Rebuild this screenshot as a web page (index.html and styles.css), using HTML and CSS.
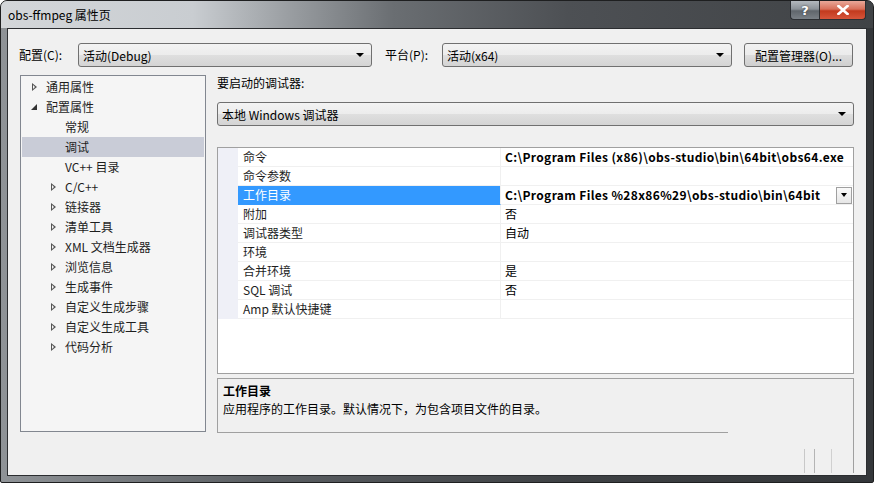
FILE: index.html
```html
<!DOCTYPE html>
<html>
<head>
<meta charset="utf-8">
<link rel="stylesheet" href="styles.css">
</head>
<body>
<div class="window">
  <div class="titlebar">
    <span class="title">obs-ffmpeg 属性页</span>
    <div class="caption">
      <div class="cbtn help">?</div>
      <div class="cbtn close">
        <svg width="12" height="10" viewBox="0 0 12 10"><path d="M1.5 1 L10.5 9 M10.5 1 L1.5 9" stroke="#fff" stroke-width="2.6" stroke-linecap="square"/></svg>
      </div>
    </div>
  </div>
  <div class="client">
    <div class="toprow">
      <span class="lbl lab1">配置(C):</span>
      <div class="combo c1"><span>活动(Debug)</span><i class="arr"></i></div>
      <span class="lbl lab2">平台(P):</span>
      <div class="combo c2"><span>活动(x64)</span><i class="arr"></i></div>
      <div class="btn">配置管理器(O)...</div>
    </div>
    <div class="main">
      <div class="tree">
        <div class="ti lv0"><i class="tri-o"></i><span>通用属性</span></div>
        <div class="ti lv0"><i class="tri-f"></i><span>配置属性</span></div>
        <div class="ti lv1n"><span>常规</span></div>
        <div class="ti lv1n sel"><span>调试</span></div>
        <div class="ti lv1n"><span>VC++ 目录</span></div>
        <div class="ti lv1"><i class="tri-o"></i><span>C/C++</span></div>
        <div class="ti lv1"><i class="tri-o"></i><span>链接器</span></div>
        <div class="ti lv1"><i class="tri-o"></i><span>清单工具</span></div>
        <div class="ti lv1"><i class="tri-o"></i><span>XML 文档生成器</span></div>
        <div class="ti lv1"><i class="tri-o"></i><span>浏览信息</span></div>
        <div class="ti lv1"><i class="tri-o"></i><span>生成事件</span></div>
        <div class="ti lv1"><i class="tri-o"></i><span>自定义生成步骤</span></div>
        <div class="ti lv1"><i class="tri-o"></i><span>自定义生成工具</span></div>
        <div class="ti lv1"><i class="tri-o"></i><span>代码分析</span></div>
      </div>
      <div class="right">
        <div class="rlabel">要启动的调试器:</div>
        <div class="combo c3"><span>本地 Windows 调试器</span><i class="arr"></i></div>
        <div class="grid">
          <div class="row"><div class="gut"></div><div class="name">命令</div><div class="val b">C:\Program Files (x86)\obs-studio\bin\64bit\obs64.exe</div></div>
          <div class="row"><div class="gut"></div><div class="name">命令参数</div><div class="val"></div></div>
          <div class="row selrow"><div class="gut"></div><div class="name">工作目录</div><div class="val b"><span>C:\Program Files %28x86%29\obs-studio\bin\64bit</span><div class="dd"><i class="arr sm"></i></div></div></div>
          <div class="row"><div class="gut"></div><div class="name">附加</div><div class="val">否</div></div>
          <div class="row"><div class="gut"></div><div class="name">调试器类型</div><div class="val">自动</div></div>
          <div class="row"><div class="gut"></div><div class="name">环境</div><div class="val"></div></div>
          <div class="row"><div class="gut"></div><div class="name">合并环境</div><div class="val">是</div></div>
          <div class="row"><div class="gut"></div><div class="name">SQL 调试</div><div class="val">否</div></div>
          <div class="row"><div class="gut"></div><div class="name">Amp 默认快捷键</div><div class="val"></div></div>
        </div>
        <div class="descwrap">
          <div class="desc">
            <div class="dt">工作目录</div>
            <div class="dd-text">应用程序的工作目录。默认情况下，为包含项目文件的目录。</div>
          </div>
          <div class="dline"></div>
          <div class="ghost"><i class="g1"></i><i class="g2"></i><i class="g3"></i></div>
        </div>
      </div>
    </div>
  </div>
</div>
</body>
</html>
```

FILE: styles.css
```css
* { box-sizing: border-box; }
html, body { margin: 0; padding: 0; }
body {
  width: 874px; height: 483px; overflow: hidden;
  font-family: "Segoe UI", "Noto Sans CJK SC", sans-serif;
  font-size: 12px; color: #000;
  background: #fff;
}
.window {
  width: 874px; height: 483px;
  display: flex; flex-direction: column;
  background: linear-gradient(to right, #8f9397 0, #5a5e62 30%, #3e4144 65%, #34373a 100%);
  border: 1px solid #1e1f20;
  border-radius: 7px 7px 2px 2px;
}
.titlebar {
  height: 27px; flex: none;
  display: flex; justify-content: space-between; align-items: flex-start;
  padding: 0 7px 0 7px;
  background: linear-gradient(to right, #d3d6d9 0, #c9cdd1 22%, #9a9ea2 33%, #6a6e72 45%, #4d5054 65%, #404346 100%);
  border-radius: 6px 6px 0 0;
}
.title { line-height: 26px; padding-top: 1px; font-size: 12px; color: #000; }
.caption { display: flex; }
.cbtn {
  height: 19px; display: flex; align-items: center; justify-content: center;
  border: 1px solid #2c2f33; border-top: none;
  color: #fff; font-weight: bold; font-size: 13px;
}
.help {
  width: 29px; border-radius: 0 0 0 4px; border-right: none;
  background: linear-gradient(#b4b9be 0, #8c9298 45%, #60666c 55%, #7a8086 100%);
  font-family: "DejaVu Sans", sans-serif; text-shadow: 0 0 2px #333;
}
.close {
  width: 47px; border-radius: 0 0 4px 0;
  background: linear-gradient(#e9a899 0, #d8705a 45%, #c33a1e 55%, #d7553a 100%);
}
.client {
  flex: 1;
  margin: 0 6px 6px 6px;
  background: #f0f0f0;
  border: 1px solid #2b2d30;
  display: flex; flex-direction: column;
}
.toprow {
  display: flex; align-items: center;
  padding: 14px 0 0 11px;
  height: 38px;
}
.lbl { line-height: 24px; }
.lab1 { width: 59px; }
.lab2 { width: 57px; margin-left: 13px; }
.combo {
  height: 24px; display: flex; align-items: center; justify-content: space-between;
  border: 1px solid #707070; border-radius: 3px;
  background: linear-gradient(#f3f3f3 0, #ececec 50%, #dfdfdf 50%, #d4d4d4 100%);
  padding: 0 7px 0 4px;
}
.c1 { width: 294px; }
.c2 { width: 290px; }
.c3 { width: 637px; margin-top: 11px; }
.arr {
  display: block; width: 0; height: 0;
  border-left: 4px solid transparent; border-right: 4px solid transparent;
  border-top: 4px solid #000;
}
.btn {
  width: 109px; height: 24px; margin-left: 12px;
  border: 1px solid #707070; border-radius: 3px;
  background: linear-gradient(#f2f2f2 0, #ebebeb 50%, #dddddd 50%, #cfcfcf 100%);
  display: flex; align-items: center; justify-content: center;
}
.main {
  display: flex; padding: 8px 0 0 12px; flex: 1;
}
.tree {
  width: 186px; height: 357px;
  border: 1px solid #828790;
  background: #f5f5f5;
  padding: 1px 1px 0 1px;
}
.ti {
  height: 20px; line-height: 20px;
  display: flex; align-items: center;
  color: #1e1e1e; white-space: nowrap;
}
.ti.lv0 { padding-left: 8px; }
.ti.lv1 { padding-left: 27px; }
.ti.lv1n { padding-left: 43px; }
.ti.sel { background: #c9ccd7; }
.ti i { width: 16px; height: 20px; display: block; position: relative; flex: none; }
.tri-o::before {
  content: ""; position: absolute; left: 2px; top: 6px;
  width: 0; height: 0;
  border-top: 4px solid transparent; border-bottom: 4px solid transparent;
  border-left: 5px solid #555;
}
.tri-o::after {
  content: ""; position: absolute; left: 3px; top: 8px;
  width: 0; height: 0;
  border-top: 2px solid transparent; border-bottom: 2px solid transparent;
  border-left: 2.5px solid #f5f5f5;
}
.tri-f::before {
  content: ""; position: absolute; left: 1px; top: 7px;
  width: 0; height: 0;
  border-left: 6px solid transparent;
  border-bottom: 6px solid #333;
}
.right {
  width: 637px; margin-left: 11px;
  display: flex; flex-direction: column;
}
.rlabel { height: 16px; line-height: 16px; }
.grid {
  margin-top: 21px;
  height: 227px;
  border: 1px solid #a0a0a0;
  background: #fff;
}
.row {
  height: 19px; display: flex;
}
.gut { width: 20px; background: #eff0f7; flex: none; }
.name {
  width: 263px; flex: none; line-height: 18px; padding-left: 5px;
  border-bottom: 1px solid #f0f0f0; border-right: 1px solid #f0f0f0;
  color: #1e1e1e;
}
.val {
  flex: 1; line-height: 18px; padding-left: 4px;
  border-bottom: 1px solid #f0f0f0;
  display: flex; align-items: center; justify-content: space-between;
  white-space: nowrap; overflow: hidden;
}
.val.b { font-weight: bold; letter-spacing: 0.35px; }
.selrow .name { background: #3399ff; color: #fff; border-bottom-color: #3399ff; }
.dd {
  width: 16px; height: 17px; margin-right: 1px;
  border: 1px solid #a0a0a0;
  background: linear-gradient(#fafafa, #e6e6e6);
  display: flex; align-items: center; justify-content: center;
}
.arr.sm { border-left-width: 3.5px; border-right-width: 3.5px; border-top-width: 4px; }
.descwrap {
  margin-top: 4px;
  border-right: 1px solid #a0a0a0;
  height: 95px;
  display: flex; flex-direction: column;
}
.desc {
  height: 54px;
  border-top: 1px solid #a0a0a0; border-left: 1px solid #a0a0a0;
  padding: 3px 0 0 5px;
}
.dt { font-weight: bold; line-height: 17px; }
.dd-text { line-height: 19px; }
.dline { width: 511px; height: 1px; background: #a0a0a0; }
.ghost { display: flex; margin-top: 16px; height: 24px; padding-left: 587px; }
.ghost i { display: block; width: 1px; height: 24px; background: #c8c8c8; }
.ghost .g2 { margin-left: 9px; background: #b4b4b4; }
.ghost .g3 { margin-left: 16px; background: #d0d0d0; }
```
